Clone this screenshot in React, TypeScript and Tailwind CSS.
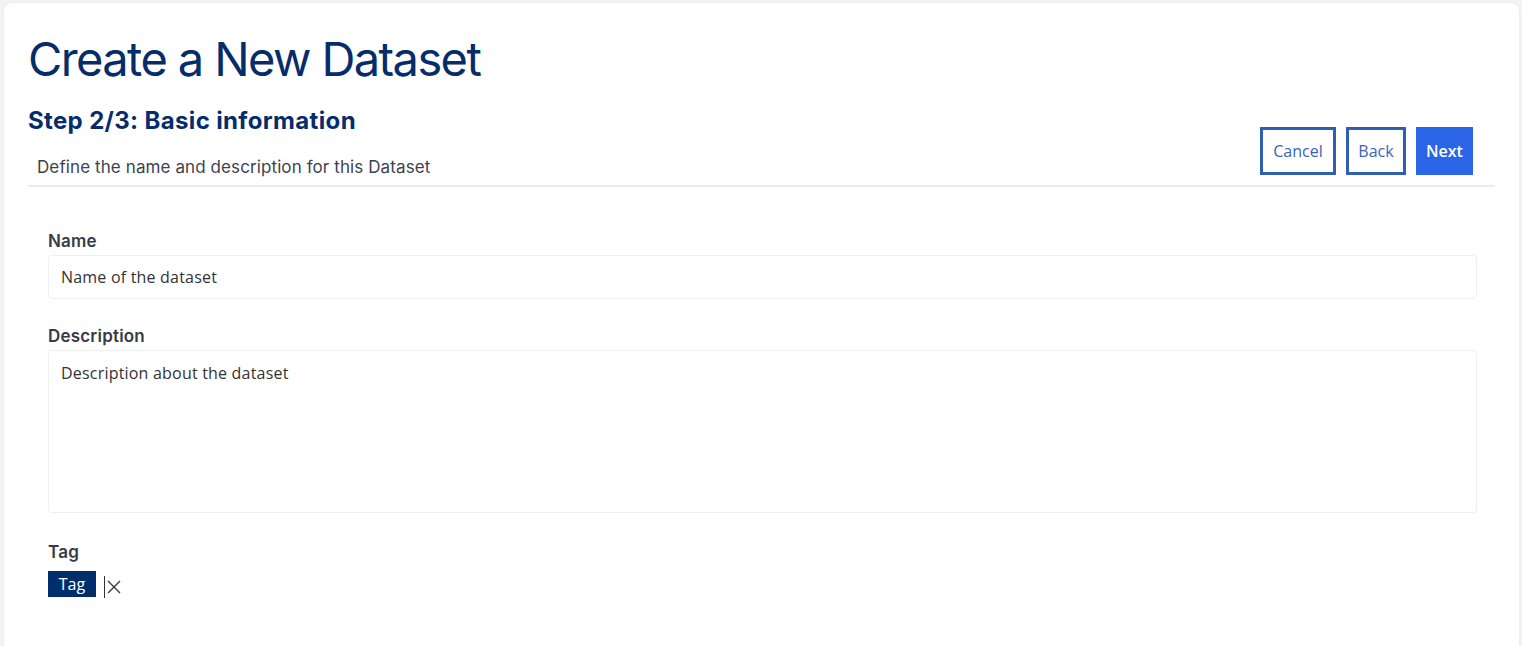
import React from 'react';

const heading = { fontFamily: 'Inter, "Noto Sans", sans-serif' };
const body = { fontFamily: '"Open Sans", "Noto Sans", sans-serif' };

export default function App() {
  return (
    <div className="min-h-screen bg-[#f3f3f3] pl-[4px] pr-[3px] pt-[3px]" style={body}>
      <div className="relative h-[643px] rounded-t-lg bg-white shadow-[0_0_2px_rgba(0,0,0,0.08)] px-[24px] pt-[26px]">
        <h1 className="text-[47px] font-normal leading-[60px] tracking-[-1.6px] text-[#062d6a]" style={heading}>
          Create a New Dataset
        </h1>

        <div className="mt-[16px] flex items-end justify-between border-b-2 border-[#ececec] pb-[8px]">
          <div>
            <h2 className="text-[24px] font-bold leading-[32px] tracking-[0.35px] text-[#062d6a]" style={heading}>
              Step 2/3: Basic information
            </h2>
            <p className="mt-[20px] pl-[9px] text-[17px] leading-[20px] tracking-[0.1px] text-[#3d4250]" style={heading}>
              Define the name and description for this Dataset
            </p>
          </div>
          <div className="mr-[22px] mb-[2px] flex gap-[10px]">
            <button className="h-[48px] w-[76px] border-[3px] border-[#2e5fb5] bg-white text-[16px] text-[#3b64b8]">
              Cancel
            </button>
            <button className="h-[48px] w-[60px] border-[3px] border-[#2e5fb5] bg-white text-[16px] text-[#3b64b8]">
              Back
            </button>
            <button className="h-[48px] w-[57px] bg-[#2965e6] text-[16px] font-semibold text-white">
              Next
            </button>
          </div>
        </div>

        <div className="mt-[43px] pl-[20px] pr-[18px]">
          <label className="block text-[17px] font-semibold leading-[22px] tracking-[0.2px] text-[#363b47]" style={heading}>
            Name
          </label>
          <div className="mt-[3px] flex h-[44px] items-center rounded border border-[#efefef] px-[12px] text-[16px] tracking-[0.2px] text-[#333]">
            Name of the dataset
          </div>

          <label className="mt-[26px] block text-[17px] font-semibold leading-[22px] tracking-[0.2px] text-[#363b47]" style={heading}>
            Description
          </label>
          <div className="mt-[3px] h-[163px] rounded border border-[#efefef] px-[12px] pt-[10px] text-[16px] tracking-[0.2px] text-[#333]">
            Description about the dataset
          </div>

          <label className="mt-[28px] block text-[17px] font-semibold leading-[22px] tracking-[0.2px] text-[#363b47]" style={heading}>
            Tag
          </label>
          <div className="mt-[7px] flex items-center">
            <span className="flex h-[26px] w-[48px] items-center justify-center bg-[#002e6b] text-[16px] text-white">
              Tag
            </span>
            <span className="ml-[8px] mt-[6px] h-[22px] w-px bg-[#333]" />
            <svg className="ml-[2px] mt-[6px]" width="14" height="14" viewBox="0 0 14 14" fill="none" stroke="#333" strokeWidth="1.3">
              <path d="M1 1l12 12M13 1L1 13" />
            </svg>
          </div>
        </div>
      </div>
    </div>
  );
}
